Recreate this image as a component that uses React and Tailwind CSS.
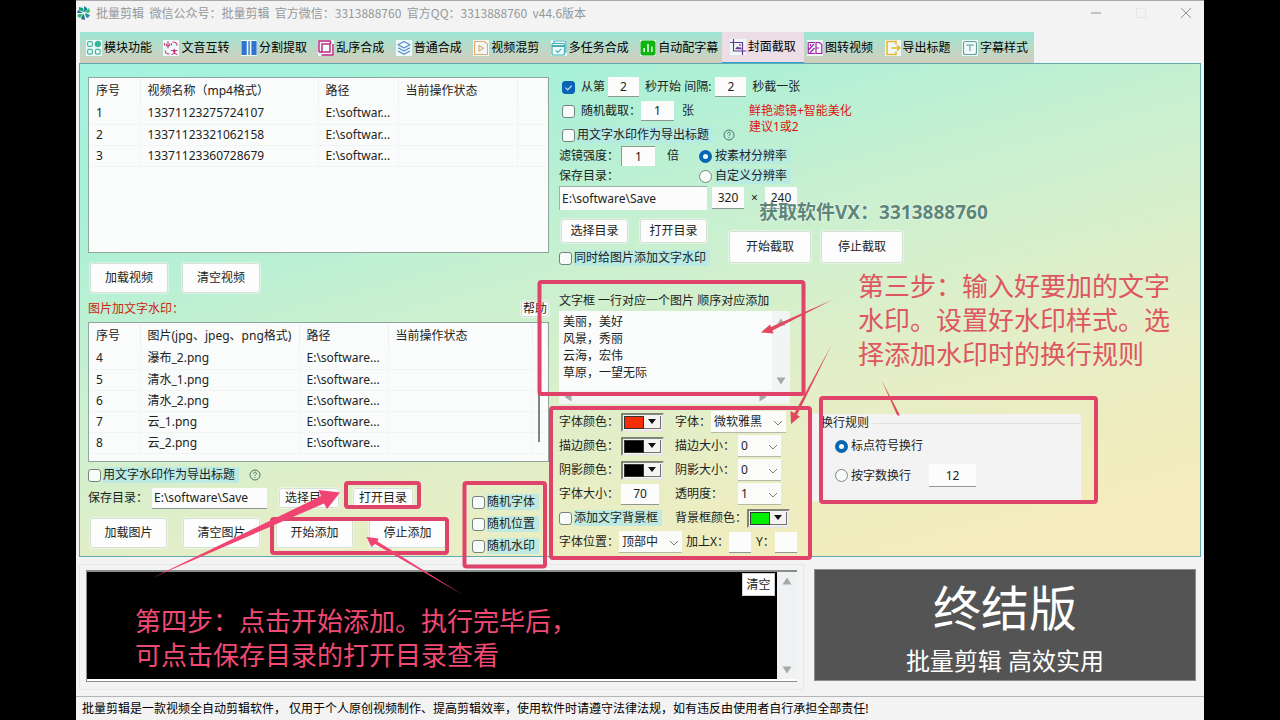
import React from "react";

const videos = [
  ["1", "13371123275724107", "E:\\softwar...", ""],
  ["2", "13371123321062158", "E:\\softwar...", ""],
  ["3", "13371123360728679", "E:\\softwar...", ""],
];

const pictures = [
  ["4", "瀑布_2.png", "E:\\software...", ""],
  ["5", "清水_1.png", "E:\\software...", ""],
  ["6", "清水_2.png", "E:\\software...", ""],
  ["7", "云_1.png", "E:\\software...", ""],
  ["8", "云_2.png", "E:\\software...", ""],
];

function TabIcon({ children }) {
  return (
    <svg viewBox="0 0 16 16" className="size-4 shrink-0 bg-[#effaf8]" fill="none" aria-hidden="true">
      {children}
    </svg>
  );
}

const tabs = [
  {
    name: "模块功能",
    icon: (
      <g stroke="#3fb9a4" strokeWidth="1.2">
        <rect x="1.6" y="1.6" width="4.8" height="4.8" rx="1.4" />
        <circle cx="11.8" cy="4" r="2.6" fill="#2fb796" />
        <rect x="1.6" y="9.4" width="4.8" height="4.8" rx="1.4" />
        <rect x="9.4" y="9.4" width="4.8" height="4.8" rx="1.4" />
      </g>
    ),
  },
  {
    name: "文音互转",
    icon: (
      <g stroke="#c8327c" strokeWidth="1.1" strokeLinecap="round">
        <path d="M5 1.500v3.500M3.200 4c0 3 3.600 3 3.600 0M5 6.500v1.200M8.500 10.500h5.500M11.200 9v1.500M9 14.500c2.200-.8 3-2 3.400-4M13.800 14.500c-2.200-.8-3-2-3.600-4" />
        <path d="M10 2c2.500 0 3.800 1 4 3.200M6 14c-2.500 0-3.600-1-3.800-3M1.500 3.500v1.500M8.500 3.500v1.500" />
      </g>
    ),
  },
  {
    name: "分割提取",
    icon: (
      <g fill="#2f73cf">
        <rect x="0.5" y="1" width="5.2" height="14" />
        <rect x="7.4" y="1" width="1.4" height="14" />
        <rect x="10.4" y="1" width="5.2" height="14" />
      </g>
    ),
  },
  {
    name: "乱序合成",
    icon: (
      <g stroke="#c0207e" strokeWidth="1.4">
        <path d="M1 12V1h11.500M3.500 15H15V4" />
        <rect x="4" y="4" width="8" height="8" />
        <path d="M1 12h3M12.500 1v3" />
      </g>
    ),
  },
  {
    name: "普通合成",
    icon: (
      <g stroke="#4f87cf" strokeWidth="1.1" strokeLinejoin="round">
        <path d="M8 1.500l6 3.200-6 3.200-6-3.200z" />
        <path d="M2 7.700l6 3.200 6-3.200M2 10.900l6 3.400 6-3.400" />
      </g>
    ),
  },
  {
    name: "视频混剪",
    icon: (
      <g stroke="#eba66b" strokeWidth="1.1" strokeLinejoin="round">
        <path d="M1.500 1.500h10l3 3v10h-13z" />
        <path d="M6 5.500l4.500 2.700L6 11z" />
      </g>
    ),
  },
  {
    name: "多任务合成",
    icon: (
      <g stroke="#45afb8" strokeWidth="1.2">
        <path d="M3 3.500V1h12v11h-1.500" />
        <rect x="1" y="3.500" width="12.500" height="11.500" rx="1" />
        <path d="M1 6h12.500" strokeWidth="2" />
        <path d="M4.800 10.400l2 2 3.500-3.500" />
      </g>
    ),
  },
  {
    name: "自动配字幕",
    icon: (
      <g>
        <rect x="0.5" y="0.5" width="15" height="15" rx="2.5" fill="#0fb312" />
        <path d="M4.200 12V8M8 12V4M11.800 12V6.500" stroke="#d6ffd6" strokeWidth="1.6" />
      </g>
    ),
  },
  {
    name: "封面截取",
    selected: true,
    icon: (
      <g stroke="#6a3796" strokeWidth="1.2">
        <path d="M3.500 0v12H16M0 3.500h12.500V16" />
        <path d="M5.500 10l2-2.400 1.600 1.500 1-1 1.400 1.900z" fill="#6a3796" strokeWidth="0.5" />
        <circle cx="9.900" cy="6" r="0.7" fill="#6a3796" strokeWidth="0.4" />
      </g>
    ),
  },
  {
    name: "图转视频",
    icon: (
      <g stroke="#a91fae" strokeWidth="1.2">
        <path d="M8 2.500H1.200v11H8M1.500 10l5.500-6M3 13l4.500-5M3.500 4v2" />
        <path d="M9 2.500h3.500l2.300 2v9H9zM9 8h3" />
      </g>
    ),
  },
  {
    name: "导出标题",
    icon: (
      <g stroke="#e7b32d" strokeWidth="1.5">
        <path d="M11 4.500V1.500H2v13h9v-3" />
        <path d="M6.500 8h8M12 5.300L14.700 8 12 10.700" />
      </g>
    ),
  },
  {
    name: "字幕样式",
    icon: (
      <g stroke="#5f9e9c" strokeWidth="1.1">
        <rect x="1.500" y="1.500" width="13" height="13" rx="2" />
        <path d="M5 5.800V5h6v.8M8 5v6" />
      </g>
    ),
  },
];

function ListTable({ heads, cols, rows, className }) {
  return (
    <div className={"overflow-hidden border border-[#8fa69f] bg-[#fafbfb] " + className}>
      <table className="w-full table-fixed border-collapse text-left">
        <colgroup>
          {cols.map((c, i) => (
            <col key={i} className={c} />
          ))}
        </colgroup>
        <thead>
          <tr className="h-[25px]">
            {heads.map((h, i) => (
              <th key={i} className="border-r border-[#eef1f0] py-0 pl-[7px] font-normal whitespace-nowrap">
                {h}
              </th>
            ))}
          </tr>
        </thead>
        <tbody>
          {rows.map((r) => (
            <tr key={r[0]} className="h-[21px] border-b border-[#f3f5f4]">
              {r.map((c, i) => (
                <td key={i} className="border-r border-[#f3f5f4] py-0 pl-[7px] whitespace-nowrap">
                  {c}
                </td>
              ))}
              <td />
            </tr>
          ))}
        </tbody>
      </table>
    </div>
  );
}

function Check({ label, checked, tint = true }) {
  return (
    <label className="flex items-center gap-0.5">
      <span className="relative flex">
        <input
          type="checkbox"
          defaultChecked={checked}
          className="peer size-[13px] appearance-none rounded-[3px] border border-[#75837f] bg-[#f7fbfa] checked:border-[#0a63b5] checked:bg-[#0a63b5]"
        />
        <svg viewBox="0 0 13 13" className="pointer-events-none absolute inset-0 size-[13px] opacity-0 peer-checked:opacity-100" fill="none" aria-hidden="true">
          <path d="M3.500 6.700l2.200 2.200 4-4.200" stroke="#cfe6fb" strokeWidth="1.1" />
        </svg>
      </span>
      <span className={tint ? "bg-[#b4e8e8]/80 pr-1 leading-4 whitespace-nowrap" : "pl-1 whitespace-nowrap"}>{label}</span>
    </label>
  );
}

function Radio({ label, name, checked, tint }) {
  return (
    <label className="flex h-5 items-center gap-[3px]">
      <input
        type="radio"
        name={name}
        defaultChecked={checked}
        className="size-[13px] appearance-none rounded-full border border-[#7d8583] bg-[#f9fbfb] checked:border-4 checked:border-[#0767b5]"
      />
      <span className={tint ? "bg-[#b4e8e8]/70 pr-1 leading-4 whitespace-nowrap" : "whitespace-nowrap"}>{label}</span>
    </label>
  );
}

function Box({ value, label, className = "" }) {
  return (
    <input
      type="text"
      aria-label={label}
      defaultValue={value}
      className={"min-w-0 shrink-0 self-center border-b border-[#8d9794] bg-[#fbfcfb] outline-none " + className}
    />
  );
}

function Btn({ children, className = "" }) {
  return (
    <button
      type="button"
      className={"shrink-0 rounded-[3px] border border-[#d5dfd6] bg-[#fcfdfc] text-center whitespace-nowrap shadow-[0_0_0_1px_#ffffff66] " + className}
    >
      {children}
    </button>
  );
}

function Pick({ value, label, className = "" }) {
  return (
    <span className={"relative flex h-[22px] shrink-0 " + className}>
      <select
        aria-label={label}
        defaultValue={value}
        className="w-full appearance-none border-b border-[#b5b9a8] bg-[#fbfcfa] pl-[3px] outline-none"
      >
        <option>{value}</option>
      </select>
      <svg viewBox="0 0 10 6" className="pointer-events-none absolute top-[9px] right-[3px] h-[6px] w-[10px]" fill="none" aria-hidden="true">
        <path d="M1 1l4 4 4-4" stroke="#777d7a" />
      </svg>
    </span>
  );
}

function ColorPick({ label, swatch }) {
  return (
    <button
      type="button"
      aria-label={label}
      className="flex h-[19px] w-[43px] shrink-0 items-stretch self-center border-2 border-[#e8e8e0] border-t-[#7f8579] border-l-[#7f8579] bg-[#f4f4f2] p-px"
    >
      <span className={"w-[20px] border border-[#333] " + swatch} />
      <span className="flex flex-1 items-center justify-center border-r border-b border-[#707070]">
        <svg viewBox="0 0 8 5" className="h-[5px] w-[8px]" aria-hidden="true">
          <path d="M0 0h8L4 5z" fill="#111" />
        </svg>
      </span>
    </button>
  );
}

function Tri({ d, className = "" }) {
  return (
    <svg viewBox="0 0 10 10" className={"size-[10px] " + className} aria-hidden="true">
      <path d={d} fill="#a6a8a9" />
    </svg>
  );
}

const UP = "M5 1.500L9.500 8.500h-9z";
const DOWN = "M5 8.500L.5 1.500h9z";
const LEFT = "M1.500 5L8.500.5v9z";
const RIGHT = "M8.500 5L1.500.5v9z";

function Help() {
  return (
    <svg viewBox="0 0 12 12" className="ml-[10px] size-3 shrink-0" fill="none" stroke="#4b7570" aria-hidden="true">
      <circle cx="6" cy="6" r="5" />
      <path d="M4.500 4.700c0-2 3-2 3 0 0 1-1.500 1-1.500 2.200M6 8v1" />
    </svg>
  );
}

function LeftColumn() {
  return (
    <section className="flex flex-col">
      <ListTable
        className="h-[176px]"
        cols={["w-[51px]", "w-[178px]", "w-[80px]", "w-[119px]", ""]}
        heads={["序号", "视频名称（mp4格式）", "路径", "当前操作状态", ""]}
        rows={videos}
      />
      <div className="mt-[10px] flex gap-[14px] pl-0.5">
        <Btn className="h-[30px] w-[78px]">加载视频</Btn>
        <Btn className="h-[30px] w-[78px]">清空视频</Btn>
      </div>
      <div className="mt-[7px] flex h-[18px] items-center justify-between">
        <h2 className="text-[#cf2410]">图片加文字水印：</h2>
        <Btn className="h-4 w-7 leading-none">帮助</Btn>
      </div>
      <div className="relative mt-1">
        <ListTable
          className="h-[140px]"
          cols={["w-[51px]", "w-[159px]", "w-[89px]", "w-[144px]", ""]}
          heads={["序号", "图片(jpg、jpeg、png格式)", "路径", "当前操作状态", ""]}
          rows={pictures}
        />
        <span className="absolute top-[70px] right-[9px] h-[50px] w-0.5 bg-[#7e8381]" />
      </div>
      <div className="flex justify-between">
        <div className="flex flex-col">
          <div className="flex h-[26px] items-center">
            <Check label="用文字水印作为导出标题" />
            <Help />
          </div>
          <div className="flex h-5 items-center">
            <label htmlFor="picdir" className="w-16">保存目录：</label>
            <input id="picdir" defaultValue="E:\software\Save" className="h-[21px] w-[115px] border-b border-[#8d9794] bg-[#fbfcfb] pl-0.5 outline-none" />
            <Btn className="ml-3 h-5 w-[60px]">选择目录</Btn>
            <Btn className="ml-[14px] h-5 w-[60px]">打开目录</Btn>
          </div>
          <div className="mt-[10px] flex gap-4 pl-0.5">
            <Btn className="h-[30px] w-[77px]">加载图片</Btn>
            <Btn className="h-[30px] w-[77px]">清空图片</Btn>
            <Btn className="h-[30px] w-[77px]">开始添加</Btn>
            <Btn className="h-[30px] w-[77px]">停止添加</Btn>
          </div>
        </div>
        <div className="flex flex-col gap-[6px] pt-8 pr-[10px]">
          <Check label="随机字体" />
          <Check label="随机位置" />
          <Check label="随机水印" />
        </div>
      </div>
    </section>
  );
}

function CaptureSettings() {
  return (
    <section className="flex flex-col">
      <div className="flex h-5 items-center pl-[3px]">
        <Check label="从第" checked tint={false} />
        <Box label="开始秒数" value="2" className="ml-[3px] h-5 w-[31px] text-center" />
        <span className="ml-[6px]">秒开始 间隔:</span>
        <Box label="间隔秒数" value="2" className="ml-1 h-5 w-[31px] text-center" />
        <span className="ml-[6px]">秒截一张</span>
      </div>
      <div className="mt-1 flex">
        <div className="flex w-[190px] flex-col gap-1">
          <div className="flex h-5 items-center pl-[3px]">
            <Check label="随机截取：" tint={false} />
            <Box label="随机张数" value="1" className="h-5 w-[33px] text-center" />
            <span className="ml-2">张</span>
          </div>
          <div className="flex h-5 items-center pl-[3px]">
            <Check label="用文字水印作为导出标题" />
            <Help />
          </div>
        </div>
        <p className="pt-0.5 leading-4 text-[#df1212]">
          鲜艳滤镜+智能美化
          <br />
          建议1或2
        </p>
      </div>
      <div className="mt-px flex">
        <div className="w-[148px]">
          <div className="flex h-5 items-center">
            <label htmlFor="strength" className="w-[62px]">滤镜强度：</label>
            <input id="strength" defaultValue="1" className="h-5 w-[34px] border-t border-l border-[#8d9794] bg-[#fbfcfb] text-center outline-none" />
            <span className="ml-3">倍</span>
          </div>
          <label htmlFor="savedir" className="flex h-5 items-center">保存目录：</label>
          <input id="savedir" defaultValue="E:\software\Save" className="h-6 w-full border-t border-l border-[#9fb0aa] bg-[#fbfcfb] pl-0.5 outline-none" />
          <div className="mt-[9px] flex justify-between pl-0.5">
            <Btn className="h-6 w-[67px]">选择目录</Btn>
            <Btn className="h-6 w-[67px]">打开目录</Btn>
          </div>
          <div className="flex h-[30px] items-center">
            <Check label="同时给图片添加文字水印" />
          </div>
        </div>
        <div className="-ml-2 flex flex-col">
          <div className="flex flex-col">
            <Radio name="res" label="按素材分辨率" checked tint />
            <Radio name="res" label="自定义分辨率" tint />
          </div>
          <div className="flex h-6 items-center pl-[13px]">
            <Box label="宽度" value="320" className="h-[22px] w-8 text-center" />
            <span className="w-[21px] text-center">×</span>
            <Box label="高度" value="240" className="h-[22px] w-8 text-center" />
          </div>
          <div className="mt-[21px] flex gap-[10px] pl-[30px]">
            <Btn className="h-8 w-[82px]">开始截取</Btn>
            <Btn className="h-8 w-[82px]">停止截取</Btn>
          </div>
        </div>
      </div>
    </section>
  );
}

function TextForm() {
  return (
    <section className="w-[250px] shrink-0">
      <label htmlFor="lines" className="flex h-[21px] items-center">文字框 一行对应一个图片 顺序对应添加</label>
      <div className="h-[93px] w-[231px] bg-[#fafbfb]">
        <div className="flex h-[79px]">
          <textarea
            id="lines"
            defaultValue={"美丽，美好\n风景，秀丽\n云海，宏伟\n草原，一望无际"}
            className="flex-1 resize-none overflow-hidden bg-transparent pt-0.5 pl-1 leading-[17px] outline-none"
          />
          <div className="flex w-[18px] flex-col items-center justify-between bg-[#f3f4f4] pt-1.5 pb-1">
            <Tri d={UP} />
            <Tri d={DOWN} />
          </div>
        </div>
        <div className="flex h-[14px] items-center justify-between bg-[#f3f4f4] pr-[22px] pl-1">
          <Tri d={LEFT} />
          <Tri d={RIGHT} />
        </div>
      </div>
      <div className="mt-[6px] grid grid-cols-[62px_54px_1fr]">
        <span className="flex h-6 items-center">字体颜色：</span>
        <ColorPick label="字体颜色" swatch="bg-[#f52d05]" />
        <span className="flex h-6 items-center">
          字体：
          <Pick label="字体" value="微软雅黑" className="w-[75px]" />
        </span>

        <span className="flex h-6 items-center">描边颜色：</span>
        <ColorPick label="描边颜色" swatch="bg-black" />
        <span className="flex h-6 items-center">
          <span className="w-[63px]">描边大小：</span>
          <Pick label="描边大小" value="0" className="w-[43px]" />
        </span>

        <span className="flex h-6 items-center">阴影颜色：</span>
        <ColorPick label="阴影颜色" swatch="bg-black" />
        <span className="flex h-6 items-center">
          <span className="w-[63px]">阴影大小：</span>
          <Pick label="阴影大小" value="0" className="w-[43px]" />
        </span>

        <span className="flex h-6 items-center">字体大小：</span>
        <Box label="字体大小" value="70" className="h-[21px] w-[38px] text-center" />
        <span className="flex h-6 items-center">
          <span className="w-[63px]">透明度：</span>
          <Pick label="透明度" value="1" className="w-[43px]" />
        </span>

        <span className="col-span-2 flex h-6 items-center">
          <Check label="添加文字背景框" />
        </span>
        <span className="flex h-6 items-center">
          背景框颜色：
          <ColorPick label="背景框颜色" swatch="bg-[#00f000]" />
        </span>

        <span className="col-span-3 flex h-6 items-center">
          字体位置：
          <Pick label="字体位置" value="顶部中" className="w-[63px]" />
          <span className="pl-1">加上X：</span>
          <Box label="加上X" value="" className="h-[21px] w-[22px]" />
          <span className="pl-[5px]">Y：</span>
          <Box label="加上Y" value="" className="h-[21px] w-[22px]" />
        </span>
      </div>
    </section>
  );
}

function WrapRules() {
  return (
    <fieldset className="mt-[124px] h-[87px] w-[272px] bg-[#f2f3f2]">
      <div className="flex h-[18px] items-center gap-1 pl-3">
        <span>换行规则</span>
        <span className="h-px flex-1 bg-[#e0e2e1]" />
      </div>
      <div className="pt-1 pl-[26px]">
        <Radio name="wrap" label="标点符号换行" checked />
        <div className="mt-2 flex items-center">
          <Radio name="wrap" label="按字数换行" />
          <Box label="每行字数" value="12" className="ml-[18px] h-[23px] w-[47px] text-center" />
        </div>
      </div>
    </fieldset>
  );
}

function Annotations() {
  return (
    <div className="pointer-events-none absolute -top-px left-0">
      <svg viewBox="76 0 1128 720" className="h-[720px] w-[1128px]" fill="none" aria-hidden="true">
        <g stroke="#e0436a" strokeWidth="4">
          <rect x="539.500" y="282" width="264" height="112" rx="2" />
          <rect x="551" y="408" width="259" height="150" rx="2" />
          <rect x="464.500" y="483" width="80.500" height="83.500" rx="2" />
          <rect x="346" y="483" width="73" height="24" rx="2" />
          <rect x="272" y="519" width="175" height="34" rx="2" />
          <rect x="821" y="398" width="275" height="104" rx="2" />
        </g>
        <g fill="#df4a5e">
          <path d="M833 299.500L771 327l-1-2.500-9 8 12.500 1-1-3z" />
          <path d="M831.500 345L794.500 413l-4-2 .5 13 9-7.500-3-1.500z" />
          <path d="M881.500 380l15.500 35 2.500 1-.5-2.500z" />
        </g>
        <g fill="#f04572">
          <path d="M152 578L324 503.500l3 5.500 13-16.500-21.500-2.500 2.500 6z" />
          <path d="M464 595.500L375 544l-3.500 3-5-10 12 1.500-1 3z" />
        </g>
      </svg>
      <p className="absolute top-[200px] left-[683px] text-[19px] leading-6 font-bold whitespace-nowrap text-[#5c8677] [text-shadow:0_0_1px_#ffffff,0_0_2px_#ffffff]">
        获取软件VX：3313888760
      </p>
      <p className="absolute top-[269px] left-[782px] text-[26px] leading-[34px] whitespace-nowrap text-[#dd5660]">
        第三步：输入好要加的文字
        <br />
        水印。设置好水印样式。选
        <br />
        择添加水印时的换行规则
      </p>
      <p className="absolute top-[604px] left-[59px] text-[26px] leading-[34px] whitespace-nowrap text-[#f04a74]">
        第四步：点击开始添加。执行完毕后，
        <br />
        可点击保存目录的打开目录查看
      </p>
    </div>
  );
}

export default function App() {
  return (
    <div className="min-h-screen overflow-x-hidden bg-black px-[76px] font-['Noto_Sans','Noto_Sans_CJK_SC',sans-serif] text-[12px] leading-[18px] text-[#1c2422]">
      <main className="relative flex min-h-screen flex-col border-t border-[#a9a9a9] bg-[#f3f3f4]">
        <header className="flex h-[31px] items-start justify-between pt-[3px] pr-[13px] font-['Noto_Sans_CJK_SC',sans-serif] text-[#959899]">
          <h1 className="flex items-center gap-1">
            <svg viewBox="0 0 16 16" className="size-4" aria-hidden="true">
              <path d="M8 7L3 5l0-3 4 1z" fill="#17a66a" />
              <path d="M8 7L8 1l3 2 0 2z" fill="#1c7fae" />
              <path d="M9 7l4-4 1 4-2 1z" fill="#2fc45d" />
              <path d="M9 8l5 2-2 3-2-1z" fill="#1b8ca3" />
              <path d="M8 9l1 6-4-1 1-3z" fill="#1d6f96" />
              <path d="M7 9l-3 4-3-2 2-2z" fill="#2bbf6a" />
              <path d="M7 8L1 8l1-3 2 1z" fill="#177f9a" />
            </svg>
            <span>
              批量剪辑&nbsp; 微信公众号：批量剪辑&nbsp; 官方微信：3313888760&nbsp; 官方QQ：3313888760&nbsp; v44.6版本
            </span>
          </h1>
          <div className="flex gap-[35px] pt-1">
            <button type="button" aria-label="最小化">
              <svg viewBox="0 0 10 10" className="size-[10px]" stroke="#8f9292"><path d="M0 5h10" /></svg>
            </button>
            <button type="button" aria-label="最大化">
              <svg viewBox="0 0 10 10" className="size-[10px]" fill="none" stroke="#e6e7e7"><rect x="0.500" y="0.500" width="9" height="9" /></svg>
            </button>
            <button type="button" aria-label="关闭">
              <svg viewBox="0 0 10 10" className="size-[10px]" stroke="#8f9292"><path d="M0 0l10 10M10 0L0 10" /></svg>
            </button>
          </div>
        </header>

        <nav className="ml-1 flex h-[31px] w-[954px] justify-between bg-linear-to-b from-[#9ce6d4] to-[#d2cdbc] px-[6px] text-black">
          {tabs.map((t) => (
            <button
              key={t.name}
              type="button"
              className={
                t.selected
                  ? "-mx-2 flex items-center gap-0.5 border-b border-[#2f9fd8] bg-[#ecdde6] px-2 whitespace-nowrap"
                  : "flex items-center gap-0.5 whitespace-nowrap"
              }
            >
              <TabIcon>{t.icon}</TabIcon>
              {t.name}
            </button>
          ))}
        </nav>

        <div className="mr-[3px] ml-[3px] flex gap-[10px] border border-[#62aab0] bg-[linear-gradient(165deg,#a5f3df_0%,#a8f0d8_18%,#c9f0d0_42%,#e6eec6_68%,#f4ecbc_90%)] pt-[13px] pr-2 pb-0.5 pl-2">
          <div className="w-[461px] shrink-0">
            <LeftColumn />
          </div>
          <div className="flex min-w-0 flex-1 flex-col">
            <CaptureSettings />
            <div className="mt-[17px] flex">
              <TextForm />
              <WrapRules />
            </div>
          </div>
        </div>

        <div className="flex gap-[10px] px-[3px] pt-[7px] pb-[6px]">
          <div className="flex w-[725px] shrink-0 border border-[#e6e7e8] px-[6px] pt-[5px] pb-[7px]">
            <div className="relative flex h-[112px] flex-1 border-t-2 border-b border-l border-[#8a8d8e] bg-white pb-0.5">
              <textarea readOnly aria-label="运行日志" className="flex-1 resize-none bg-black outline-none" />
              <button type="button" className="absolute top-px right-[22px] h-[23px] w-[33px] border border-[#d0d0d0] bg-white text-[#1c2422]">
                清空
              </button>
              <div className="flex w-[20px] flex-col items-center justify-between bg-[#f0f1f2] pt-1 pb-1">
                <Tri d={UP} />
                <Tri d={DOWN} />
              </div>
            </div>
          </div>
          <div className="flex min-w-0 flex-1 pt-[5px] pr-[5px] pb-[7px]">
            <div className="flex h-[112px] flex-1 flex-col items-center border border-[#8c8c8c] bg-[#545455] pt-2 text-white">
              <strong className="text-[48px] leading-[60px] font-normal">终结版</strong>
              <span className="mt-2 text-[24px] leading-[30px]">批量剪辑 高效实用</span>
            </div>
          </div>
        </div>

        <footer className="mt-auto flex h-6 items-center border-t border-[#b3b5b6] pl-[6px] text-black">
          批量剪辑是一款视频全自动剪辑软件，&nbsp;仅用于个人原创视频制作、提高剪辑效率，使用软件时请遵守法律法规，如有违反由使用者自行承担全部责任!
        </footer>

        <Annotations />
      </main>
    </div>
  );
}
